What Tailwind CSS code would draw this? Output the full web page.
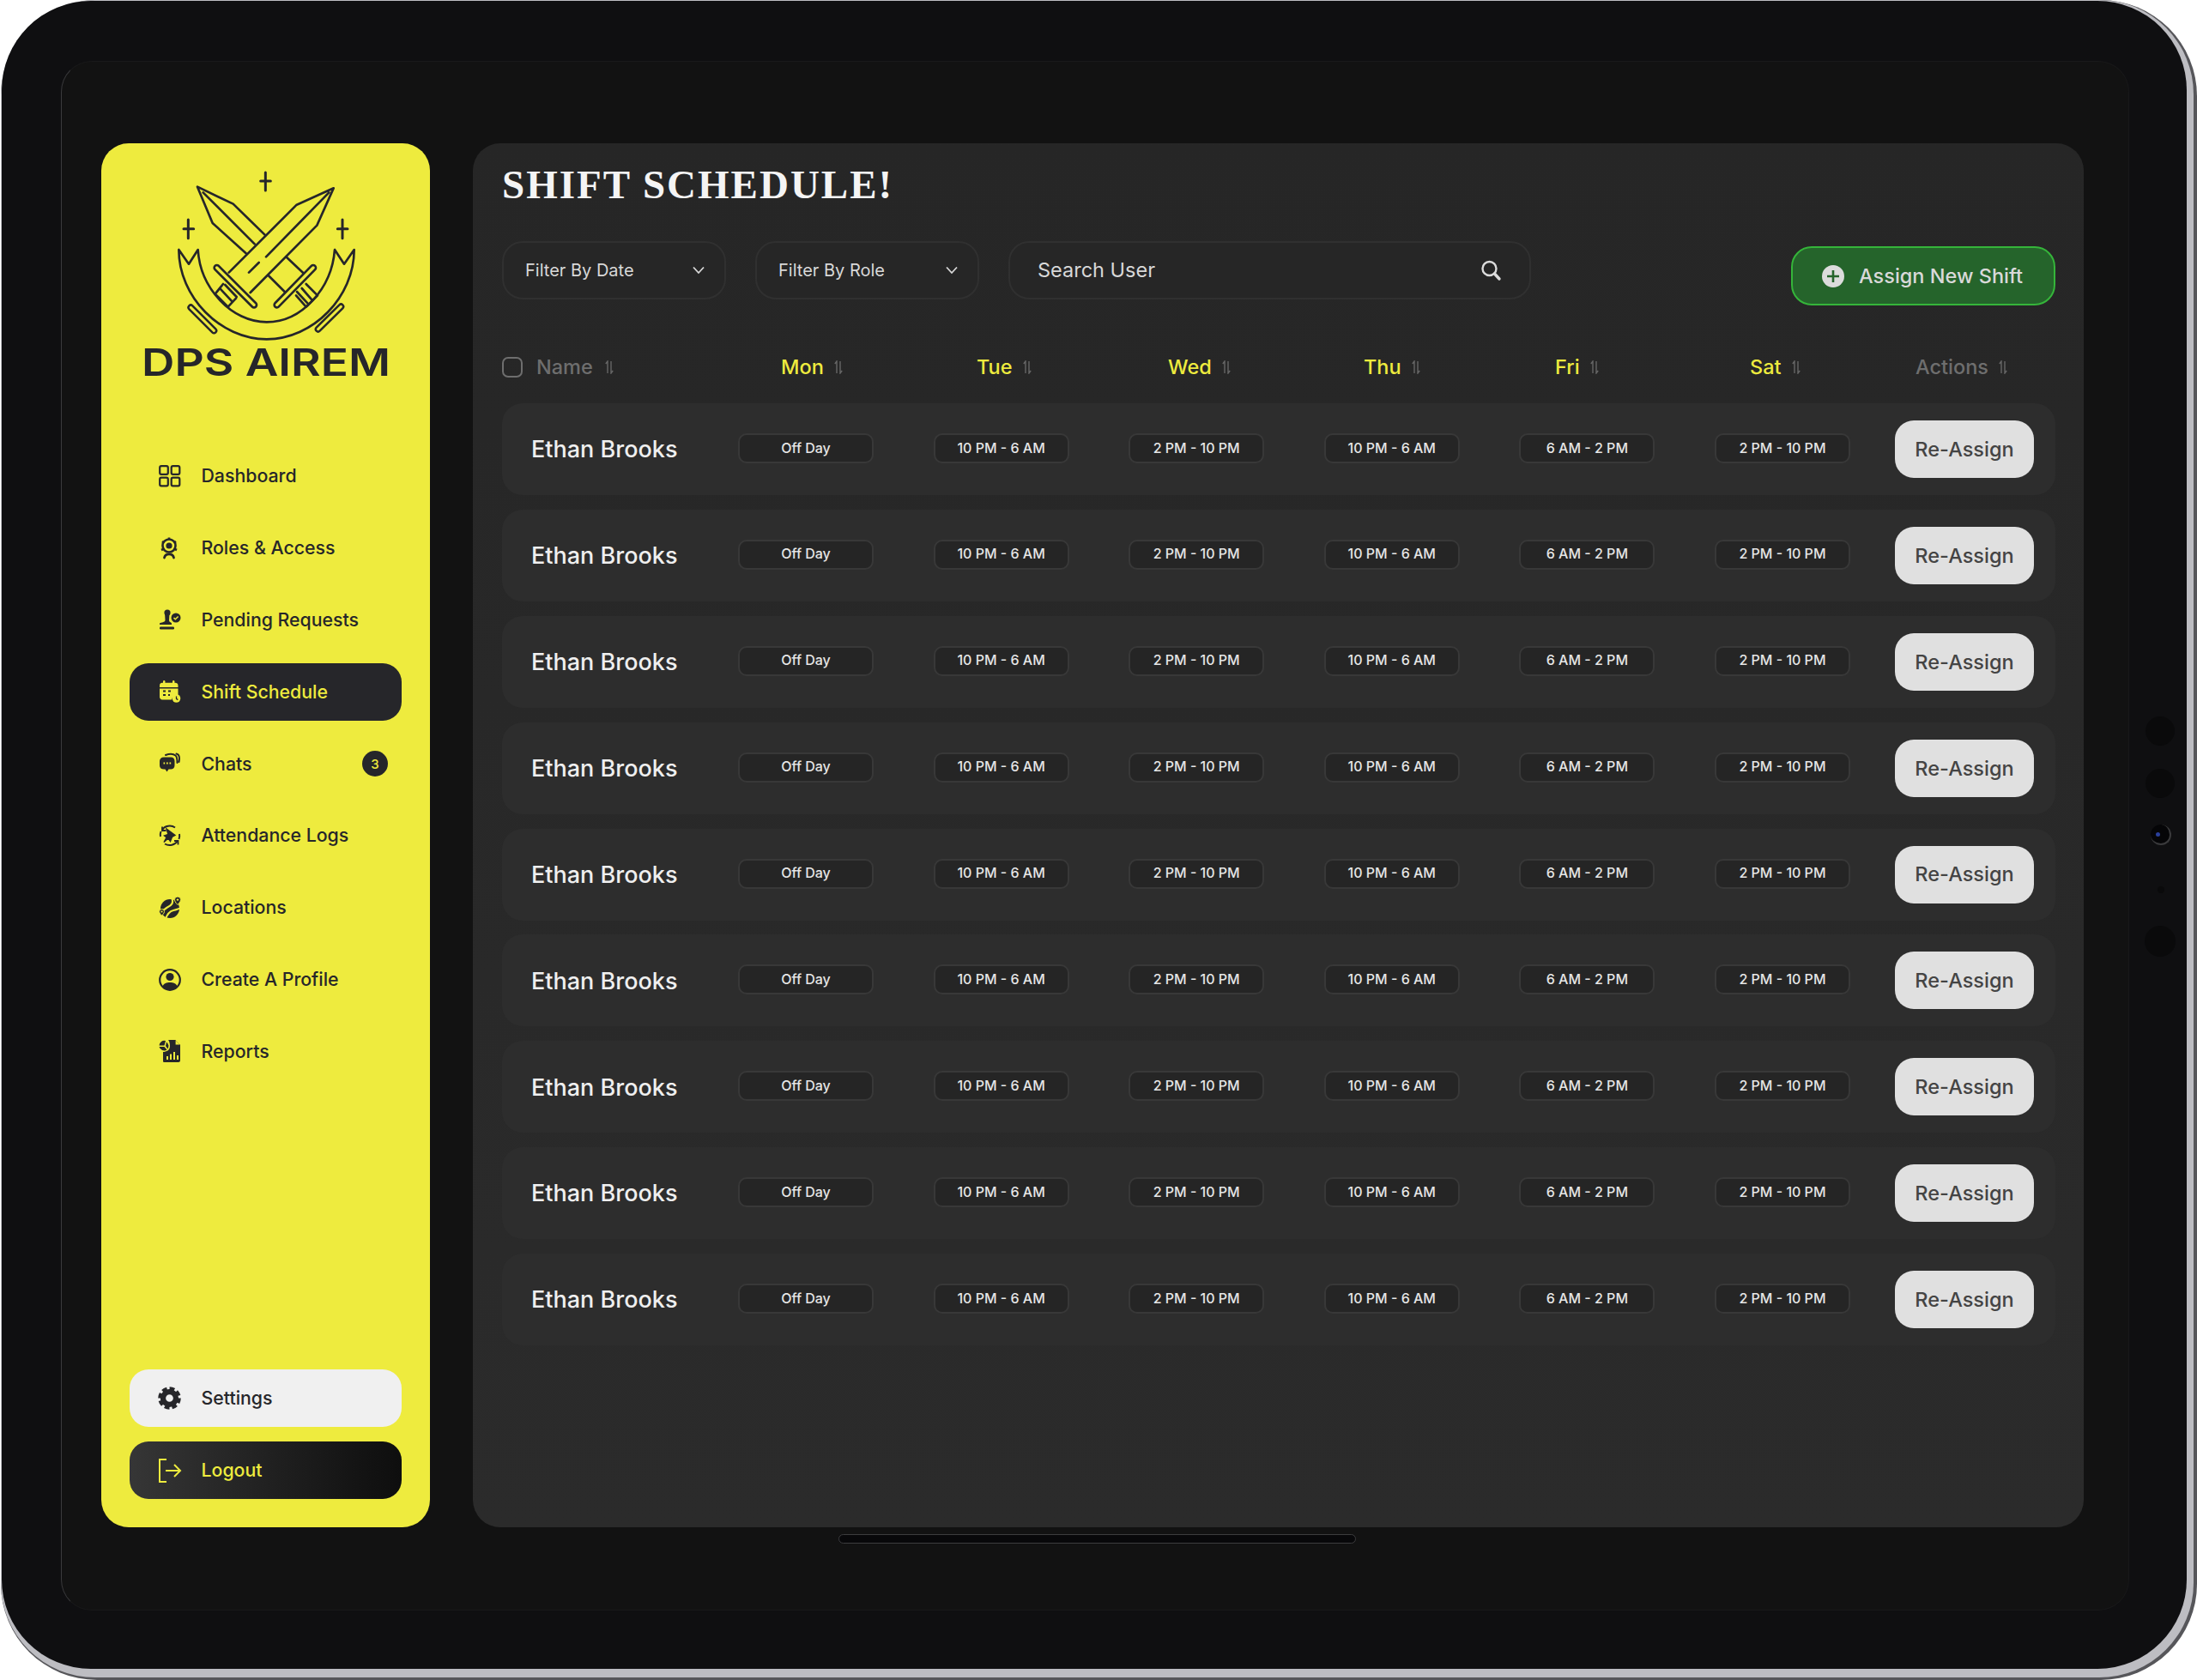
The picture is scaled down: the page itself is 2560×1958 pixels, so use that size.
<!DOCTYPE html>
<html lang="en">

<head>
    <meta charset="UTF-8">
    <meta name="viewport" content="width=device-width, initial-scale=1.0">
    <title>Shift Schedule</title>
    <script src="https://cdn.jsdelivr.net/npm/@tailwindcss/browser@4"></script>
</head>

<body class="bg-white w-[2560px] h-[1958px] overflow-hidden font-['Inter',sans-serif]">

    <!-- tablet frame -->
    <div class="relative ml-[1px] w-[2559px] h-[1958px] pr-[4px] pb-[3px] rounded-[112px] bg-[#56565a]">
        <div class="w-full h-full pr-[8px] pb-[10px] pl-[1px] pt-[1px] rounded-[110px] bg-[#bdbdc2]">
            <div class="w-full h-full pl-[69px] pt-[70px] rounded-[104px] bg-[#0f0f11]">

                <!-- screen -->
                <div class="flex w-[2410px] h-[1806px] pl-[46px] pt-[95px] gap-[50px] rounded-[36px] bg-[#121212] border border-[#19191a] border-l-[#3a3a3c]">

                    <!-- sidebar -->
                    <aside class="flex flex-col w-[383px] h-[1613px] px-[33px] pb-[33px] rounded-[32px] bg-[#eeeb3e] text-[#26262a]">
                        <svg class="mt-[29px] ml-[49px] shrink-0" width="220" height="204" viewBox="300 140 660 612" fill="none" stroke="#26262a" stroke-width="8" stroke-linecap="round" stroke-linejoin="round">
                            <path d="M628 155V218M611 185H646M358 320V385M342 352H377M897 320V385M880 352H915" stroke-width="9" />
                            <path d="M628 375L515 265L390 205L443 332L560 438M410 225L590 405M700 450L762 508M638 515L695 572" />
                            <path d="M866 210L737 268L500 505M866 210L808 340L575 575M850 225L630 450M605 470L570 505" />
                            <path d="M458 488L588 618M795 488L668 618" stroke-width="26" />
                            <path d="M458 488L588 618M795 488L668 618" stroke="#eeeb3e" stroke-width="10" />
                            <path d="M480 545L452 580L497 625L525 595M470 562L512 607M487 548L527 590" />
                            <path d="M770 545L810 585L770 625L735 585M755 560L790 600M738 572L775 612" />
                            <path d="M392 425L360 475L325 425C325 590 470 738 632 738C795 738 938 590 938 425L903 475L870 425C860 560 755 678 632 678C510 678 400 560 392 425Z" />
                            <path d="M367 627L448 708M892 624L812 703" stroke-width="24" />
                            <path d="M367 627L448 708M892 624L812 703" stroke="#eeeb3e" stroke-width="9" />
                        </svg>
                        <svg class="-ml-[10px] -mt-[14px] shrink-0" width="336" height="64" viewBox="0 0 336 64">
                            <text x="24" y="52" textLength="290" lengthAdjust="spacingAndGlyphs" fill="#26262a" style="font-family:'Inter',sans-serif;font-size:44px;font-weight:600">DPS AIREM</text>
                        </svg>

                        <nav class="flex flex-col gap-[16.8px] mt-[71.6px] text-[21.3px] font-medium leading-none">
                            <a class="flex items-center h-[67px] pl-[34px]">
                                <svg class="w-[49.5px] shrink-0" width="26" height="26" viewBox="0 0 26 26" fill="none" stroke="currentColor" stroke-width="2.2" preserveAspectRatio="xMinYMid">
                                    <rect x="1.2" y="1.2" width="9.6" height="9.6" rx="1.8" />
                                    <rect x="14.7" y="1.2" width="9.6" height="9.6" rx="1.8" />
                                    <rect x="1.2" y="14.7" width="9.6" height="9.6" rx="1.8" />
                                    <rect x="14.7" y="14.7" width="9.6" height="9.6" rx="1.8" />
                                </svg>
                                Dashboard
                            </a>
                            <a class="flex items-center h-[67px] pl-[34px]">
                                <svg class="w-[49.5px] shrink-0" width="26" height="26" viewBox="0 0 26 26" fill="none" stroke="currentColor" preserveAspectRatio="xMinYMid">
                                    <circle cx="12" cy="10" r="7.5" stroke-width="2.6" />
                                    <circle cx="12" cy="10" r="3.6" fill="currentColor" stroke="none" />
                                    <path d="M12 .5V3M4 5L6 6.5M20 5L18 6.5M3 15L5.5 13.8M21 15L18.5 13.8" stroke-width="2.6" />
                                    <path d="M6.5 24C7.5 18.5 16.5 18.5 17.5 24" stroke-width="2.8" stroke-linecap="round" />
                                </svg>
                                Roles &amp; Access
                            </a>
                            <a class="flex items-center h-[67px] pl-[34px]">
                                <svg class="w-[49.5px] shrink-0" width="26" height="26" viewBox="0 0 26 26" fill="currentColor" preserveAspectRatio="xMinYMid">
                                    <circle cx="10" cy="4" r="3.6" />
                                    <path d="M7 4H12.5L12 13C12 15 14 15 15 16.5V18H1V16.5C3 15 7 15.5 7.5 13Z" />
                                    <rect x="1" y="20.5" width="17" height="3" rx="1.2" />
                                    <circle cx="20" cy="10" r="5.5" />
                                    <path d="M17.5 10L19.3 11.8L22.6 8.4" fill="none" stroke="#eeeb3e" stroke-width="1.5" />
                                </svg>
                                Pending Requests
                            </a>
                            <a class="flex items-center h-[67px] pl-[34px] rounded-[22px] bg-[#26262a] text-[#eeeb3e]">
                                <svg class="w-[49.5px] shrink-0" width="26" height="26" viewBox="0 0 26 26" fill="currentColor" preserveAspectRatio="xMinYMid">
                                    <path d="M1 6C1 4 2.5 2.8 4 2.8H19C21 2.8 22.5 4 22.5 6V8H1ZM1 9.5H22.5V17A6.5 6.5 0 0 0 15 22.5H4C2.5 22.5 1 21 1 19.5Z" />
                                    <rect x="5" y="0" width="2.4" height="5" rx="1.2" />
                                    <rect x="16" y="0" width="2.4" height="5" rx="1.2" />
                                    <path d="M5 12.5H8M11 12.5H14M5 17H8M11 17H13" stroke="#26262a" stroke-width="2" />
                                    <circle cx="20.5" cy="21" r="4.8" />
                                    <path d="M20.5 18.5V21.3L22.3 22.6" fill="none" stroke="#26262a" stroke-width="1.3" />
                                </svg>
                                Shift Schedule
                            </a>
                            <a class="flex items-center h-[67px] pl-[34px]">
                                <svg class="w-[49.5px] shrink-0" width="26" height="26" viewBox="0 0 26 26" fill="none" preserveAspectRatio="xMinYMid">
                                    <path d="M6 5.5H14C17 5.5 18.5 7.5 18.5 10V15C18.5 18 16.5 19.5 14 19.5H11.5L9.5 22.5L7.5 19.5H6C3 19.5 1 18 1 15V10C1 7.5 3 5.5 6 5.5Z" fill="currentColor" />
                                    <path d="M5.5 12.5H7.2M9 12.5H10.7M12.5 12.5H14.2" stroke="#eeeb3e" stroke-width="2" />
                                    <path d="M8 3C12 1.5 17 1.5 19.5 3.5C21.5 5 21.5 9 21.5 12M20.5 1.5C23 2 24 4.5 24 7C24 9 23.7 10 23.5 11" stroke="currentColor" stroke-width="2" stroke-linecap="round" />
                                </svg>
                                Chats
                                <span class="flex items-center justify-center ml-auto mr-[16px] w-[30px] h-[30px] rounded-full bg-[#26262a] text-[#eeeb3e] text-[15px] font-medium">3</span>
                            </a>
                            <a class="flex items-center h-[67px] pl-[34px]">
                                <svg class="w-[49.5px] shrink-0" width="26" height="26" viewBox="0 0 26 26" fill="none" stroke="currentColor" stroke-width="2" preserveAspectRatio="xMinYMid">
                                    <path d="M4 6C7 1.5 14 0 19 3.5" />
                                    <path d="M22 19C19 24 12 25.5 7 22.5" />
                                    <path d="M2 14A11 11 0 0 1 2.5 8M24 11A11 11 0 0 1 23.5 17" />
                                    <path d="M4 2.5V7H8.5M22.5 23.5V19H18" stroke-width="1.8" />
                                    <path d="M9 5L19 12.5L15.5 14.5L13.5 19.5L11 16L6 20.5L9 15L6.5 13L11 11.5Z" fill="currentColor" stroke-width="1.4" />
                                </svg>
                                Attendance Logs
                            </a>
                            <a class="flex items-center h-[67px] pl-[34px]">
                                <svg class="w-[49.5px] shrink-0" width="26" height="26" viewBox="0 0 26 26" fill="currentColor" preserveAspectRatio="xMinYMid">
                                    <circle cx="13" cy="14" r="11" />
                                    <path d="M1 17C6 17 7 14 10 12.5C14 10.5 18 8 15 1M8 26C10 20 13 17 17 16C20 15 23 15 26 12.5" fill="none" stroke="#eeeb3e" stroke-width="2.2" />
                                    <path d="M22 0A3.6 3.6 0 0 1 25.6 3.6C25.6 6 22 9.5 22 9.5C22 9.5 18.4 6 18.4 3.6A3.6 3.6 0 0 1 22 0Z" stroke="#eeeb3e" />
                                    <circle cx="22" cy="3.6" r="1.2" fill="#eeeb3e" />
                                    <path d="M3.5 14.5A3 3 0 0 1 6.5 17.5C6.5 19.5 3.5 22 3.5 22C3.5 22 .5 19.5 .5 17.5A3 3 0 0 1 3.5 14.5Z" stroke="#eeeb3e" />
                                    <circle cx="3.5" cy="17.5" r="1.1" fill="#eeeb3e" />
                                </svg>
                                Locations
                            </a>
                            <a class="flex items-center h-[67px] pl-[34px]">
                                <svg class="w-[49.5px] shrink-0" width="26" height="26" viewBox="0 0 26 26" fill="none" preserveAspectRatio="xMinYMid">
                                    <path d="M4.5 20.5C6 17 9 16 13 16C17 16 20 17 21.5 20.5C19.5 23.5 16.5 25 13 25C9.5 25 6.5 23.5 4.5 20.5Z" fill="currentColor" />
                                    <circle cx="13" cy="9.5" r="4.6" fill="currentColor" />
                                    <circle cx="13" cy="13" r="11.8" stroke="currentColor" stroke-width="2.2" />
                                </svg>
                                Create A Profile
                            </a>
                            <a class="flex items-center h-[67px] pl-[34px]">
                                <svg class="w-[49.5px] shrink-0" width="26" height="26" viewBox="0 0 26 26" fill="currentColor" preserveAspectRatio="xMinYMid">
                                    <path d="M11 0H19L25 6V24C25 25 24 26 23 26H6C5 26 5 25 5 24V14C9 14 13 12 13 7C13 4 12 1 11 0Z" />
                                    <path d="M19 0V6H25" fill="#eeeb3e" stroke="currentColor" stroke-width="1.2" />
                                    <path d="M8 1A6 6 0 0 0 .5 6.5H6.5ZM.5 8A6 6 0 0 0 9.5 11.5L6.5 8Z" />
                                    <path d="M9 2.5A6 6 0 0 1 10.5 10.5L8 7Z" />
                                    <path d="M10 23V19M14 23V16.5M18 23V14M22 23V18" stroke="#eeeb3e" stroke-width="2" />
                                </svg>
                                Reports
                            </a>
                        </nav>

                        <div class="flex flex-col gap-[17px] mt-auto text-[21.3px] font-medium leading-none">
                            <a class="flex items-center h-[67px] pl-[33px] rounded-[22px] bg-[#f0f0f0]">
                                <svg class="w-[50.5px] shrink-0" width="27" height="27" viewBox="0 0 26 26" fill="none" stroke="#26262a" preserveAspectRatio="xMinYMid">
                                    <circle cx="13" cy="13" r="11" stroke-width="3.6" stroke-dasharray="5.6 3" />
                                    <circle cx="13" cy="13" r="7.2" stroke-width="6" />
                                </svg>
                                Settings
                            </a>
                            <a class="flex items-center h-[67px] pl-[32px] rounded-[22px] bg-linear-to-r from-[#363636] to-[#0e0e0e] text-[#eeeb3e]">
                                <svg class="w-[51.5px] shrink-0" width="28" height="28" viewBox="0 0 28 28" fill="none" stroke="currentColor" stroke-width="2" preserveAspectRatio="xMinYMid">
                                    <path d="M11 1H3V27H11" />
                                    <path d="M10 14H27M20 7L27 14L20 21" />
                                </svg>
                                Logout
                            </a>
                        </div>
                    </aside>

                    <!-- main panel -->
                    <main class="w-[1877px] h-[1613px] pl-[34px] pr-[33px] rounded-[32px] bg-linear-to-b from-[#262626] to-[#2b2b2b]">
                        <h1 class="h-[96px] mb-[18px] leading-[96px] text-[47px] font-bold tracking-[2px] text-[#f4f4f4] font-['Liberation_Serif',serif]">SHIFT SCHEDULE!</h1>

                        <div class="flex items-start gap-[34px]">
                            <button class="flex items-center justify-between w-[261px] h-[68px] pl-[25px] pr-[22px] rounded-[24px] bg-[#262626] border-2 border-[#303030] text-[20px] text-[#d8d8d8]">
                                Filter By Date
                                <svg width="16" height="10" viewBox="0 0 16 10" fill="none" stroke="#d8d8d8" stroke-width="1.8"><path d="M2 1.5L8 8L14 1.5" /></svg>
                            </button>
                            <button class="flex items-center justify-between w-[261px] h-[68px] pl-[25px] pr-[22px] rounded-[24px] bg-[#262626] border-2 border-[#303030] text-[20px] text-[#d8d8d8]">
                                Filter By Role
                                <svg width="16" height="10" viewBox="0 0 16 10" fill="none" stroke="#d8d8d8" stroke-width="1.8"><path d="M2 1.5L8 8L14 1.5" /></svg>
                            </button>
                            <div class="flex items-center justify-between w-[609px] h-[68px] pl-[32px] pr-[32px] rounded-[24px] bg-[#262626] border-2 border-[#303030] text-[23.5px] text-[#d8d8d8]">
                                Search User
                                <svg width="26" height="26" viewBox="0 0 26 26" fill="none" stroke="#dcdcdc"><circle cx="11.5" cy="11" r="8" stroke-width="2.4" /><path d="M17.5 17L23 23" stroke-width="3.4" stroke-linecap="round" /></svg>
                            </div>
                            <button class="flex items-center ml-auto mt-[6px] w-[308px] h-[69px] pl-[34px] rounded-[24px] bg-[#25642b] border-2 border-[#35b53a] text-[23.5px] font-medium text-[#d9d9d9]">
                                <svg class="mr-[17px]" width="26" height="26" viewBox="0 0 26 26"><circle cx="13" cy="13" r="13" fill="#dcdcdc" /><path d="M13 6V20M6 13H20" stroke="#25642b" stroke-width="2.6" /></svg>
                                Assign New Shift
                            </button>
                        </div>

                        <!-- table head -->
                        <div class="flex items-center h-[24px] mt-[60px] text-[23.5px] font-medium">
                            <div class="flex items-center w-[325px] text-[#6e6e6e]">
                                <span class="w-[24px] h-[24px] mr-[16px] rounded-[7px] border-2 border-[#6e6e6e]"></span>
                                Name
                                <svg class="ml-[14px]" width="10" height="16" viewBox="0 0 10 16" fill="none" stroke="#666" stroke-width="1.4"><path d="M3 15V1L.8 4M7 1V15L9.2 12" /></svg>
                            </div>
                            <div class="flex items-center w-[228px] text-[#eeeb3e]">Mon<svg class="ml-[12px]" width="10" height="16" viewBox="0 0 10 16" fill="none" stroke="#666" stroke-width="1.4"><path d="M3 15V1L.8 4M7 1V15L9.2 12" /></svg></div>
                            <div class="flex items-center w-[223px] text-[#eeeb3e]">Tue<svg class="ml-[12px]" width="10" height="16" viewBox="0 0 10 16" fill="none" stroke="#666" stroke-width="1.4"><path d="M3 15V1L.8 4M7 1V15L9.2 12" /></svg></div>
                            <div class="flex items-center w-[228px] text-[#eeeb3e]">Wed<svg class="ml-[12px]" width="10" height="16" viewBox="0 0 10 16" fill="none" stroke="#666" stroke-width="1.4"><path d="M3 15V1L.8 4M7 1V15L9.2 12" /></svg></div>
                            <div class="flex items-center w-[223px] text-[#eeeb3e]">Thu<svg class="ml-[12px]" width="10" height="16" viewBox="0 0 10 16" fill="none" stroke="#666" stroke-width="1.4"><path d="M3 15V1L.8 4M7 1V15L9.2 12" /></svg></div>
                            <div class="flex items-center w-[227px] text-[#eeeb3e]">Fri<svg class="ml-[12px]" width="10" height="16" viewBox="0 0 10 16" fill="none" stroke="#666" stroke-width="1.4"><path d="M3 15V1L.8 4M7 1V15L9.2 12" /></svg></div>
                            <div class="flex items-center w-[193px] text-[#eeeb3e]">Sat<svg class="ml-[12px]" width="10" height="16" viewBox="0 0 10 16" fill="none" stroke="#666" stroke-width="1.4"><path d="M3 15V1L.8 4M7 1V15L9.2 12" /></svg></div>
                            <div class="flex items-center text-[#6e6e6e]">Actions<svg class="ml-[12px]" width="10" height="16" viewBox="0 0 10 16" fill="none" stroke="#666" stroke-width="1.4"><path d="M3 15V1L.8 4M7 1V15L9.2 12" /></svg></div>
                        </div>

                        <div class="flex flex-col gap-[16.9px] mt-[30px]" id="rows"></div>
                    </main>
                </div>
            </div>
        </div>

        <!-- sensors on the bezel -->
        <span class="absolute left-[2499px] top-[835px] w-[34px] h-[34px] rounded-full bg-[#0a0a0b]"></span>
        <span class="absolute left-[2499px] top-[896px] w-[34px] h-[34px] rounded-full bg-[#0a0a0b]"></span>
        <span class="absolute left-[2505px] top-[961px] w-[24px] h-[24px] rounded-full bg-[#050507] border-b-2 border-r-2 border-[#3a3a3c]"></span>
        <span class="absolute left-[2511px] top-[970px] w-[5px] h-[5px] rounded-full bg-[#2a3f9a]"></span>
        <span class="absolute left-[2513px] top-[1033px] w-[8px] h-[8px] rounded-full bg-[#0a0a0b]"></span>
        <span class="absolute left-[2498px] top-[1079px] w-[36px] h-[36px] rounded-full bg-[#0a0a0b]"></span>
        <!-- home bar -->
        <span class="absolute left-[976px] top-[1788px] w-[603px] h-[11px] rounded-full bg-[#08080a] border border-[#3c3c3e]"></span>
    </div>

    <script>
        const shifts = ['Off Day', '10 PM - 6 AM', '2 PM - 10 PM', '10 PM - 6 AM', '6 AM - 2 PM', '2 PM - 10 PM']
        const rows = document.querySelector('#rows')

        // nine identical rows, as in the design
        for (let i = 0; i < 9; i++) {
            let pills = ''
            shifts.forEach(shift => {
                pills += `<span class="flex items-center justify-center shrink-0 w-[158px] h-[35px] pb-[2px] rounded-[10px] bg-[#252525] border-2 border-[#383838] text-[16px] font-medium text-[#e6e6e6]">${shift}</span>`
            })
            rows.innerHTML += `<div class="flex items-center h-[107px] pl-[34px] pr-[25px] rounded-[24px] bg-[#2d2d2d]">
                <span class="shrink-0 w-[241px] mt-[2px] text-[27px] font-medium text-[#efefef]">Ethan Brooks</span>
                <div class="flex gap-[69.6px] -mt-[2px]">${pills}</div>
                <button class="ml-auto w-[162px] h-[67px] rounded-[22px] bg-[#e0e0e0] text-[23.5px] font-medium text-[#444444]">Re-Assign</button>
            </div>`
        }
    </script>

</body>

</html>
